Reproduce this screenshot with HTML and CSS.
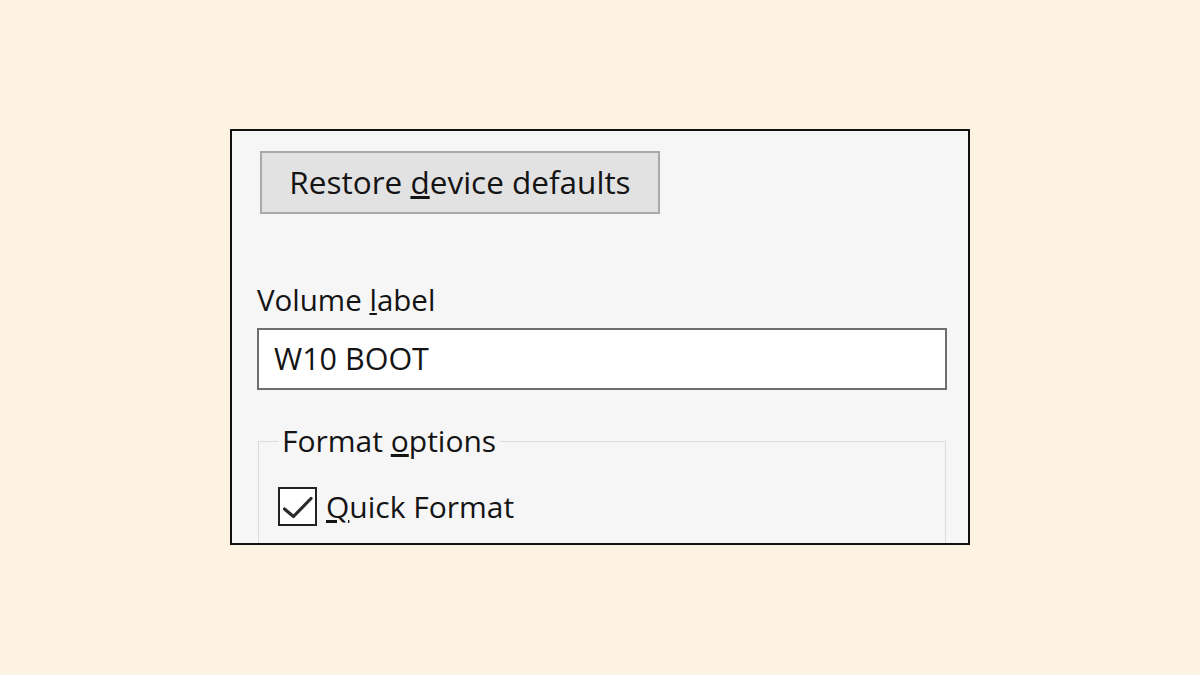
FILE: index.html
```html
<!DOCTYPE html>
<html>
<head>
<meta charset="utf-8">
<link rel="stylesheet" href="styles.css">
</head>
<body>
<div class="frame">
  <div class="panel">
    <button class="btn">Restore <u>d</u>evice defaults</button>
    <div class="label">Volume <u>l</u>abel</div>
    <div class="input">W10 BOOT</div>
    <fieldset class="group">
      <legend class="legend">Format <u>o</u>ptions</legend>
      <div class="check-row">
        <span class="checkbox">
          <svg viewBox="0 0 35 35" width="35" height="35"><path d="M4.5 20 L13.5 27.5 L31 9.5" fill="none" stroke="#2b2b2b" stroke-width="3.2" stroke-linecap="round" stroke-linejoin="round"/></svg>
        </span>
        <span class="check-text"><u>Q</u>uick Format</span>
      </div>
    </fieldset>
  </div>
</div>
</body>
</html>
```

FILE: styles.css
```css
html, body {
  margin: 0;
  padding: 0;
}
body {
  background: #fdf3e3;
  height: 675px;
  display: flex;
  align-items: center;
  justify-content: center;
  font-family: "Open Sans", "Noto Sans", sans-serif;
  color: #141414;
}
.frame {
  width: 736px;
  height: 412px;
  border: 2px solid #111;
  background: #f6f6f6;
  overflow: hidden;
  box-sizing: content-box;
  margin-top: -1px;
}
.panel {
  padding: 20px 0 0 25px;
  display: flex;
  flex-direction: column;
  align-items: flex-start;
}
.btn {
  margin-left: 3px;
  width: 400px;
  height: 63px;
  box-sizing: border-box;
  border: 2px solid #a9a9a9;
  background: #e2e2e2;
  font-family: inherit;
  font-size: 31.5px;
  color: #141414;
  padding: 0 0 2px 0;
  text-align: center;
}
.label {
  margin-top: 68px;
  font-size: 29.5px;
  line-height: 36px;
}
.input {
  margin-top: 10px;
  width: 690px;
  height: 62px;
  box-sizing: border-box;
  border: 2px solid #6e6e6e;
  background: #ffffff;
  font-size: 30.5px;
  line-height: 56px;
  padding-left: 15px;
}
.group {
  margin: 33px 0 0 1px;
  width: 688px;
  height: 200px;
  box-sizing: border-box;
  border: 1px solid #dcdcdc;
  padding: 28px 0 0 19px;
}
.legend {
  font-size: 30px;
  line-height: 36px;
  padding: 0 4px;
}
.check-row {
  display: flex;
  align-items: center;
  gap: 9px;
}
.checkbox {
  width: 39px;
  height: 39px;
  box-sizing: border-box;
  border: 2px solid #222;
  background: #fff;
  display: flex;
  align-items: center;
  justify-content: center;
}
.check-text {
  font-size: 30px;
  line-height: 36px;
}
```
